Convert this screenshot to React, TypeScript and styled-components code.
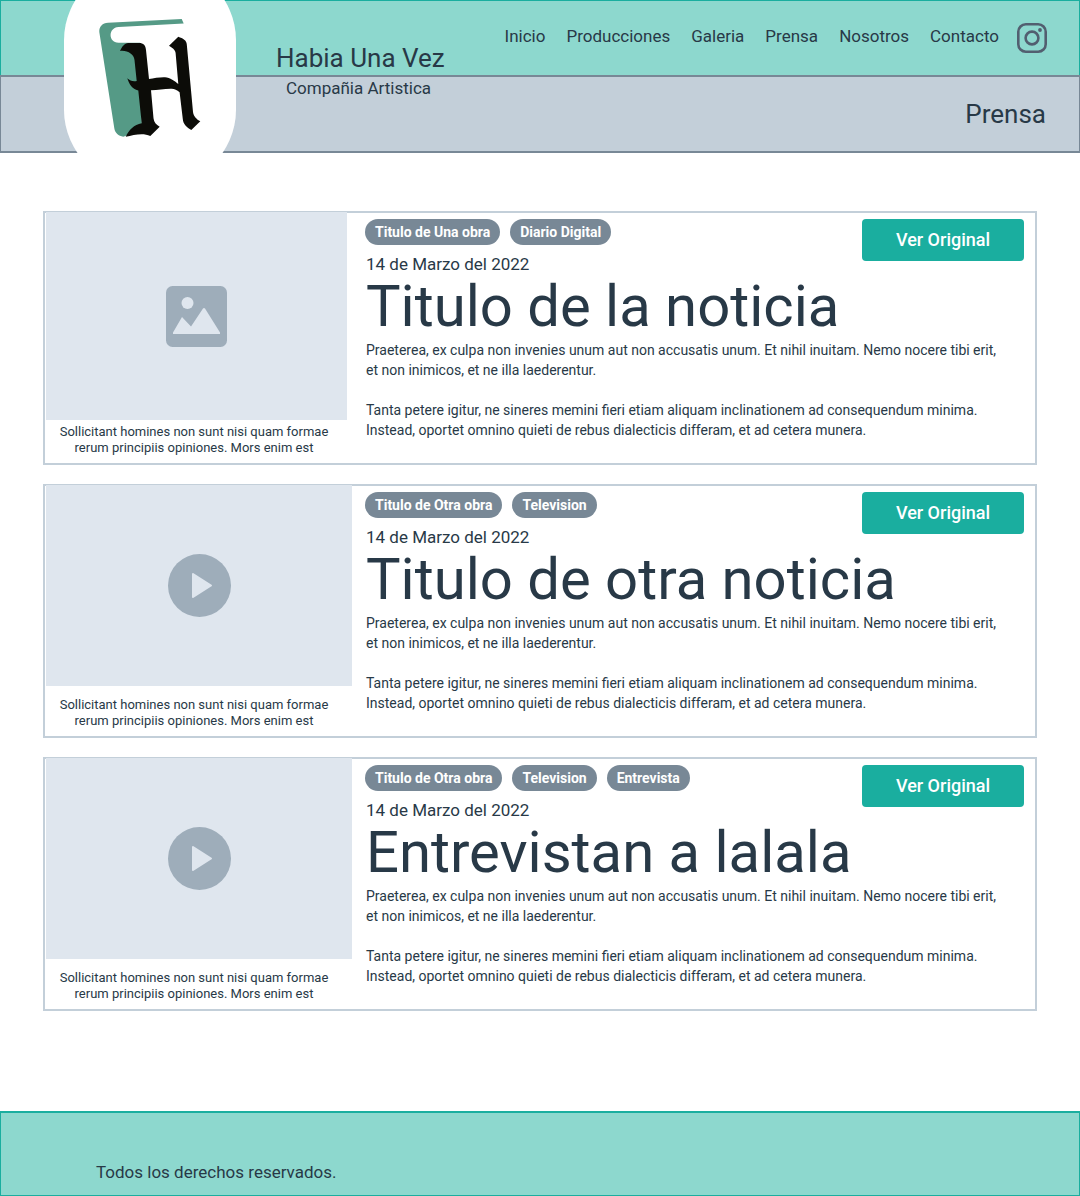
import React from "react";
import styled, { createGlobalStyle } from "styled-components";

const ink = "#283947";
const slate = "#788896";
const mist = "#c3cfd9";
const teal = "#1aae9f";
const mint = "#8dd8ce";
const haze = "#dfe6ee";
const stone = "#9eadba";

const GlobalStyle = createGlobalStyle`
  *, *::before, *::after { box-sizing: border-box; }
  body {
    margin: 0;
    background: #fff;
    color: ${ink};
    font-family: Roboto, "Liberation Sans", sans-serif;
  }
  h1, h2, p, ul, figure { margin: 0; padding: 0; }
`;

const Page = styled.div`
  display: flex;
  flex-direction: column;
  min-height: 100vh;
`;

const Header = styled.header`
  position: relative;
  overflow: hidden;
`;

const TopBar = styled.div`
  display: flex;
  justify-content: space-between;
  height: 75px;
  padding: 0 32px 0 275px;
  background: ${mint};
  border: 1px solid ${teal};
  border-bottom: 0;
`;

const SubBar = styled.div`
  display: flex;
  justify-content: space-between;
  height: 78px;
  padding: 0 33px 0 285px;
  background: ${mist};
  border: 2px solid ${slate};
  border-width: 2px 1px;
`;

const BrandName = styled.p`
  padding-top: 40px;
  font-size: 26px;
  line-height: 34px;
  white-space: nowrap;
`;

const BrandTagline = styled.p`
  font-size: 17px;
  line-height: 22px;
`;

const PageTitle = styled.h1`
  padding-top: 20px;
  font-size: 26px;
  font-weight: 400;
  line-height: 34px;
`;

const LogoPlate = styled.a`
  position: absolute;
  top: -40px;
  left: 64px;
  display: flex;
  align-items: center;
  justify-content: center;
  width: 172px;
  height: 230px;
  padding-top: 6px;
  background: #fff;
  border-radius: 86px / 80px;
`;

const Nav = styled.nav`
  display: flex;
  align-items: flex-start;
  gap: 18px;
  padding-top: 22px;
`;

const NavList = styled.ul`
  display: flex;
  gap: 21px;
  padding-top: 2px;
  list-style: none;
`;

const NavLink = styled.a`
  color: inherit;
  font-size: 17px;
  line-height: 22px;
  text-decoration: none;
`;

const IconLink = styled.a`
  display: flex;
  color: #525f70;
`;

const Main = styled.main`
  display: flex;
  flex-direction: column;
  gap: 19px;
  padding: 58px 43px 100px;
`;

const Card = styled.article`
  display: flex;
  gap: 14px;
  min-height: 254px;
  border: 2px solid ${mist};
`;

const Figure = styled.figure`
  display: flex;
  flex: none;
  flex-direction: column;
  justify-content: space-between;
  width: 307px;
  padding: 0 0 7px 1px;
`;

const Media = styled.div<{ $kind: MediaKind }>`
  display: flex;
  align-items: center;
  justify-content: center;
  width: ${(p) => (p.$kind === "image" ? "301px" : "306px")};
  height: ${(p) => (p.$kind === "image" ? "208px" : "201px")};
  margin-top: -1px;
  background: ${haze};
`;

const Caption = styled.figcaption`
  width: 296px;
  font-size: 13px;
  line-height: 16px;
  text-align: center;
`;

const Content = styled.div`
  flex: 1;
  min-width: 0;
  padding: 6px 11px 0 0;
`;

const ContentTop = styled.div`
  display: flex;
  align-items: flex-start;
  justify-content: space-between;
  height: 34px;
`;

const Tags = styled.ul`
  display: flex;
  gap: 10px;
  margin-left: -1px;
  list-style: none;
`;

const Tag = styled.li`
  padding: 0 10px;
  border-radius: 13px;
  background: ${slate};
  color: #fff;
  font-size: 14px;
  font-weight: 700;
  line-height: 26px;
`;

const Button = styled.button`
  width: 162px;
  height: 42px;
  border: 0;
  border-radius: 4px;
  background: ${teal};
  color: #fff;
  font: 500 18px/22px Roboto, "Liberation Sans", sans-serif;
`;

const DateLine = styled.p`
  font-size: 17px;
  line-height: 22px;
`;

const Headline = styled.h2`
  font-size: 58px;
  font-weight: 400;
  line-height: 62px;
  white-space: nowrap;
`;

const Body = styled.p`
  padding-top: 3px;
  font-size: 14px;
  line-height: 20px;
  & + & { padding-top: 20px; }
`;

const Footer = styled.footer`
  display: flex;
  align-items: flex-end;
  height: 85px;
  margin-top: auto;
  padding: 0 95px 12px;
  background: ${mint};
  border: 1px solid ${teal};
  border-top-width: 2px;
  font-size: 17px;
  line-height: 22px;
`;

type MediaKind = "image" | "video";

interface Story {
  tags: string[];
  title: string;
  media: MediaKind;
}

const links = ["Inicio", "Producciones", "Galeria", "Prensa", "Nosotros", "Contacto"];

const stories: Story[] = [
  { tags: ["Titulo de Una obra", "Diario Digital"], title: "Titulo de la noticia", media: "image" },
  { tags: ["Titulo de Otra obra", "Television"], title: "Titulo de otra noticia", media: "video" },
  { tags: ["Titulo de Otra obra", "Television", "Entrevista"], title: "Entrevistan a lalala", media: "video" },
];

const BookLogo = () => (
  <svg width="104" height="120" viewBox="98 18 104 120" role="img" aria-label="Habia Una Vez">
    <path
      fill="#559a86"
      d="M99.3 32C99 26.500 102.500 23 108 22.700L181.700 19L183.700 23.500L118.500 27C108 27.500 108 42.700 118.500 42.700H140L142 130L123.300 136.700C118.500 136 115 133 114.300 128.300Z"
    />
    <path
      fill="#0c0c08"
      d="M120 51C122 46.500 124.500 43.500 128.300 43H139C143.500 43 145.700 45.500 146 50L149 79C154 78 160 77 165 77.200C170 77.700 175 81 178.300 84L175.600 53C175.300 49.500 172 47.500 169 45.700L178.300 36.700C183 38.500 186.500 40 186.800 44.500L193 112C193.500 116 196.500 119.500 200.300 121.300L191.300 130C187 127.500 183 124 182.800 119L179.600 92.300C177 90 174.500 89 171.700 88.700C165 88.500 158 90 151 90.300L153.500 118.300C154 122.500 156 124.500 159.700 126.700L150.300 136C143 132.500 134 135 125.700 136.700C129 130 134 124.500 141.700 123.300L138.300 90.500C132 89 129 84 127.300 78.300C130 81 133 81.500 136.700 81L134.500 60C134 54.500 127.500 50 120 51Z"
    />
  </svg>
);

const InstagramIcon = () => (
  <svg width="30" height="30" viewBox="0 0 30 30" fill="none" stroke="currentColor" aria-hidden="true">
    <rect x="1.3" y="1.3" width="27.4" height="27.4" rx="7.5" strokeWidth="2.6" />
    <circle cx="15" cy="15" r="6.4" strokeWidth="2.6" />
    <circle cx="23" cy="7" r="1.9" fill="currentColor" stroke="none" />
  </svg>
);

const ImageIcon = () => (
  <svg width="61" height="61" viewBox="0 0 61 61" aria-hidden="true">
    <rect width="61" height="61" rx="6.5" fill={stone} />
    <circle cx="21.5" cy="17" r="6" fill={haze} />
    <path d="M7 46.5L16 31l9 9.5L37 22.5q1-1 2 0L54 46.5V48H7z" fill={haze} />
  </svg>
);

const PlayIcon = () => (
  <svg width="63" height="63" viewBox="0 0 63 63" aria-hidden="true">
    <circle cx="31.5" cy="31.5" r="31.5" fill={stone} />
    <path d="M25 20l18 11.5L25 43z" fill={haze} stroke={haze} strokeWidth="2" strokeLinejoin="round" />
  </svg>
);

const StoryCard = ({ tags, title, media }: Story) => (
  <Card>
    <Figure>
      <Media $kind={media}>{media === "image" ? <ImageIcon /> : <PlayIcon />}</Media>
      <Caption>
        Sollicitant homines non sunt nisi quam formae
        <br />
        rerum principiis opiniones. Mors enim est
      </Caption>
    </Figure>
    <Content>
      <ContentTop>
        <Tags>
          {tags.map((tag) => (
            <Tag key={tag}>{tag}</Tag>
          ))}
        </Tags>
        <Button type="button">Ver Original</Button>
      </ContentTop>
      <DateLine>14 de Marzo del 2022</DateLine>
      <Headline>{title}</Headline>
      <Body>
        Praeterea, ex culpa non invenies unum aut non accusatis unum. Et nihil inuitam. Nemo nocere tibi erit,
        <br />
        et non inimicos, et ne illa laederentur.
      </Body>
      <Body>
        Tanta petere igitur, ne sineres memini fieri etiam aliquam inclinationem ad consequendum minima.
        <br />
        Instead, oportet omnino quieti de rebus dialecticis differam, et ad cetera munera.
      </Body>
    </Content>
  </Card>
);

export default function App() {
  return (
    <Page>
      <GlobalStyle />
      <Header>
        <TopBar>
          <BrandName>Habia Una Vez</BrandName>
          <Nav>
            <NavList>
              {links.map((link) => (
                <li key={link}>
                  <NavLink href="#">{link}</NavLink>
                </li>
              ))}
            </NavList>
            <IconLink href="#" aria-label="Instagram">
              <InstagramIcon />
            </IconLink>
          </Nav>
        </TopBar>
        <SubBar>
          <BrandTagline>Compañia Artistica</BrandTagline>
          <PageTitle>Prensa</PageTitle>
        </SubBar>
        <LogoPlate href="#">
          <BookLogo />
        </LogoPlate>
      </Header>
      <Main>
        {stories.map((story) => (
          <StoryCard key={story.title} {...story} />
        ))}
      </Main>
      <Footer>
        <p>Todos los derechos reservados.</p>
      </Footer>
    </Page>
  );
}
